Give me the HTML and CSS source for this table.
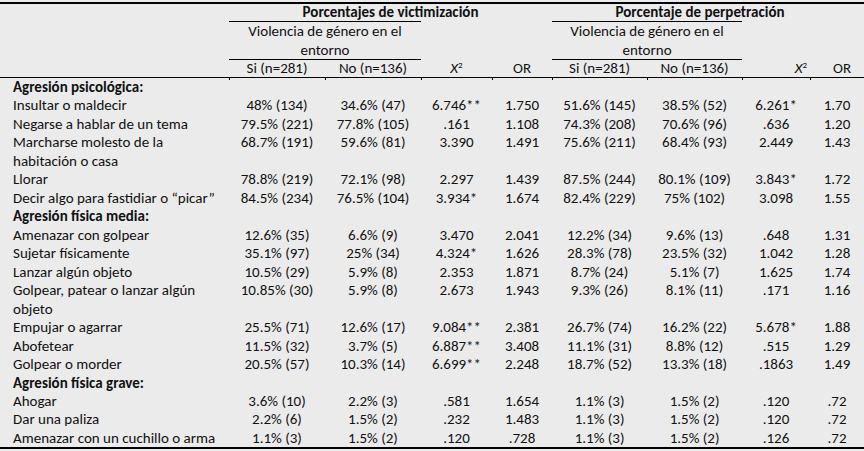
FILE: index.html
```html
<!DOCTYPE html>
<html lang="es">
<head>
<meta charset="utf-8">
<title>Tabla</title>
<link rel="stylesheet" href="styles.css">
</head>
<body>
<table class="tbl">
  <colgroup>
    <col class="c-label"><col class="c-si"><col class="c-no"><col class="c-x2"><col class="c-or">
    <col class="c-si2"><col class="c-no2"><col class="c-x2b"><col class="c-or2">
  </colgroup>
  <thead>
    <tr class="h1">
      <th></th>
      <th colspan="4" class="grp">Porcentajes de victimización</th>
      <th colspan="4" class="grp grp-r">Porcentaje de perpetración</th>
    </tr>
    <tr class="h2">
      <th></th>
      <th colspan="2" class="sub">Violencia de género en el<br>entorno</th>
      <th></th><th></th>
      <th colspan="2" class="sub">Violencia de género en el<br>entorno</th>
      <th></th><th></th>
    </tr>
    <tr class="h3">
      <th></th>
      <th class="t">Si (n=281)</th>
      <th class="t">No (n=136)</th>
      <th class="t"><i>X</i><sup>2</sup></th>
      <th class="t">OR</th>
      <th class="t">Si (n=281)</th>
      <th class="t">No (n=136)</th>
      <th class="t x2r"><i>X</i><sup>2</sup></th>
      <th class="t orr">OR</th>
    </tr>
  </thead>
  <tbody>
    <tr class="sec"><td colspan="9">Agresión psicológica:</td></tr>
    <tr><td>Insultar o maldecir</td><td>48% (134)</td><td>34.6% (47)</td><td>6.746**</td><td>1.750</td><td>51.6% (145)</td><td>38.5% (52)</td><td>6.261*</td><td>1.70</td></tr>
    <tr><td>Negarse a hablar de un tema</td><td>79.5% (221)</td><td>77.8% (105)</td><td>.161</td><td>1.108</td><td>74.3% (208)</td><td>70.6% (96)</td><td>.636</td><td>1.20</td></tr>
    <tr><td>Marcharse molesto de la<br>habitación o casa</td><td>68.7% (191)</td><td>59.6% (81)</td><td>3.390</td><td>1.491</td><td>75.6% (211)</td><td>68.4% (93)</td><td>2.449</td><td>1.43</td></tr>
    <tr><td>Llorar</td><td>78.8% (219)</td><td>72.1% (98)</td><td>2.297</td><td>1.439</td><td>87.5% (244)</td><td>80.1% (109)</td><td>3.843*</td><td>1.72</td></tr>
    <tr><td>Decir algo para fastidiar o “picar”</td><td>84.5% (234)</td><td>76.5% (104)</td><td>3.934*</td><td>1.674</td><td>82.4% (229)</td><td>75% (102)</td><td>3.098</td><td>1.55</td></tr>
    <tr class="sec"><td colspan="9">Agresión física media:</td></tr>
    <tr><td>Amenazar con golpear</td><td>12.6% (35)</td><td>6.6% (9)</td><td>3.470</td><td>2.041</td><td>12.2% (34)</td><td>9.6% (13)</td><td>.648</td><td>1.31</td></tr>
    <tr><td>Sujetar físicamente</td><td>35.1% (97)</td><td>25% (34)</td><td>4.324*</td><td>1.626</td><td>28.3% (78)</td><td>23.5% (32)</td><td>1.042</td><td>1.28</td></tr>
    <tr><td>Lanzar algún objeto</td><td>10.5% (29)</td><td>5.9% (8)</td><td>2.353</td><td>1.871</td><td>8.7% (24)</td><td>5.1% (7)</td><td>1.625</td><td>1.74</td></tr>
    <tr><td>Golpear, patear o lanzar algún<br>objeto</td><td>10.85% (30)</td><td>5.9% (8)</td><td>2.673</td><td>1.943</td><td>9.3% (26)</td><td>8.1% (11)</td><td>.171</td><td>1.16</td></tr>
    <tr><td>Empujar o agarrar</td><td>25.5% (71)</td><td>12.6% (17)</td><td>9.084**</td><td>2.381</td><td>26.7% (74)</td><td>16.2% (22)</td><td>5.678*</td><td>1.88</td></tr>
    <tr><td>Abofetear</td><td>11.5% (32)</td><td>3.7% (5)</td><td>6.887**</td><td>3.408</td><td>11.1% (31)</td><td>8.8% (12)</td><td>.515</td><td>1.29</td></tr>
    <tr><td>Golpear o morder</td><td>20.5% (57)</td><td>10.3% (14)</td><td>6.699**</td><td>2.248</td><td>18.7% (52)</td><td>13.3% (18)</td><td>.1863</td><td>1.49</td></tr>
    <tr class="sec"><td colspan="9">Agresión física grave:</td></tr>
    <tr><td>Ahogar</td><td>3.6% (10)</td><td>2.2% (3)</td><td>.581</td><td>1.654</td><td>1.1% (3)</td><td>1.5% (2)</td><td>.120</td><td>.72</td></tr>
    <tr><td>Dar una paliza</td><td>2.2% (6)</td><td>1.5% (2)</td><td>.232</td><td>1.483</td><td>1.1% (3)</td><td>1.5% (2)</td><td>.120</td><td>.72</td></tr>
    <tr><td>Amenazar con un cuchillo o arma</td><td>1.1% (3)</td><td>1.5% (2)</td><td>.120</td><td>.728</td><td>1.1% (3)</td><td>1.5% (2)</td><td>.126</td><td>.72</td></tr>
  </tbody>
</table>
</body>
</html>
```

FILE: styles.css
```css
html, body {
  margin: 0;
  padding: 0;
  background: #ebebeb;
}
body {
  font-family: Carlito, Calibri, Lato, "Noto Sans", sans-serif;
  font-size: 15px;
  color: #111;
}
.tbl {
  margin-top: 2px;
  width: 864px;
  table-layout: fixed;
  border-collapse: separate;
  border-spacing: 0;
  border-top: 2px solid #000;
  border-bottom: 2px solid #000;
}
.c-label { width: 229px; }
.c-si { width: 96px; }
.c-no { width: 96px; }
.c-x2 { width: 71px; }
.c-or { width: 60px; }
.c-si2 { width: 95px; }
.c-no2 { width: 95px; }
.c-x2b { width: 68px; }
.c-or2 { width: 54px; }

th, td {
  padding: 0;
  font-weight: normal;
  text-align: center;
  vertical-align: top;
  white-space: nowrap;
}
.h1 th {
  line-height: 17px;
  font-weight: bold;
}
.grp-r { padding-right: 16px; }
.h2 th {
  line-height: 18.5px;
  border-top: 1px solid transparent;
  border-bottom: 1px solid transparent;
}
.h2 th.sub {
  border-top-color: #000;
  border-bottom-color: #000;
}
.h3 th {
  line-height: 17px;
  border-bottom: 1px solid #000;
  position: relative;
}
.h3 th.t::after {
  content: "";
  position: absolute;
  left: 0;
  bottom: -3px;
  width: 1px;
  height: 2px;
  background: #000;
}
.h3 th.x2r { text-align: right; padding-right: 3px; }
.h3 th.orr { padding-left: 10px; }
sup {
  font-size: 9px;
  line-height: 0;
  vertical-align: 5px;
}
tbody td {
  line-height: 18.47px;
}
tbody td:first-child {
  text-align: left;
  padding-left: 13px;
}
tr.sec td {
  font-weight: bold;
}
```
